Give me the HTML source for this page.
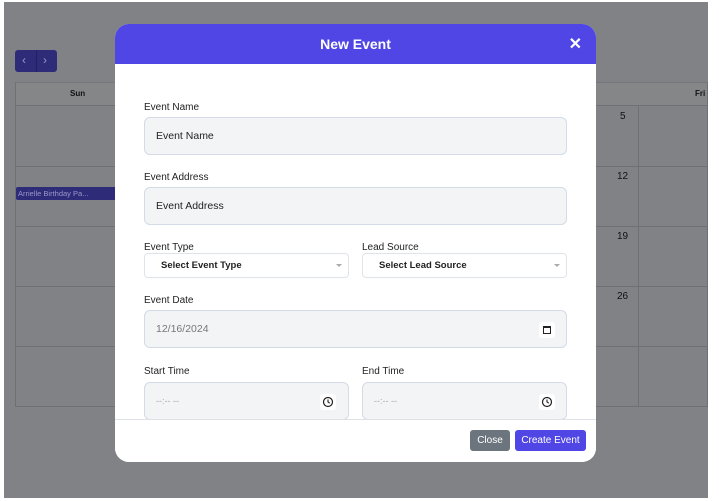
<!DOCTYPE html>
<html><head><style>
*{box-sizing:border-box;margin:0;padding:0}
body{width:719px;height:501px;background:#fff;font-family:"Liberation Sans",sans-serif;position:relative;overflow:hidden}
.ov{position:absolute;left:4px;top:2px;width:704px;height:496px;background:#818286}
.abs{position:absolute}
.nav{left:15px;top:50px;width:42px;height:22px;background:#2e2b79;border-radius:3px}
.nav span{position:absolute;top:3px;color:#9a98c8;font-size:12px}
.hdr{left:15px;top:82px;width:693px;height:24px;background:#858688;border-top:1px solid #76777a;border-bottom:1px solid #6f7073}
.vl{width:1px;background:#6f7073}
.hl{height:1px;background:#6f7073;left:15px;width:693px}
.m{left:115px;top:24px;width:481px;height:438px;background:#fff;border-radius:14px;overflow:hidden}
.mh{height:40px;background:#4f46e5;color:#fff;font-weight:bold;font-size:14px;text-align:center;line-height:41px}
.lab{position:absolute;font-size:10px;color:#222}
.inp{position:absolute;background:#f3f4f6;border:1px solid #d3dbe6;border-radius:6px;font-size:10.5px;color:#222;padding-left:11px;display:flex;align-items:center}
.sel{position:absolute;background:#fff;border:1px solid #dfe3ea;border-radius:4px;font-size:9.5px;font-weight:bold;color:#222;padding-left:16px;display:flex;align-items:center}
.sel i{position:absolute;right:6px;top:10px;border:3px solid transparent;border-top:3px solid #aaa}
.ic{position:absolute;width:16px;height:16px;background:#fff;border-radius:3px}
.btn{position:absolute;font-size:10px;color:#fff;border-radius:3px;text-align:center;line-height:22px;height:21px}
</style></head><body>
<div class="ov"></div>
<div class="abs nav"><span style="left:7px">‹</span><span style="left:28px">›</span><div class="abs" style="left:21px;top:0;width:1px;height:22px;background:#232060"></div></div>
<div class="abs hdr"><span class="abs" style="left:55px;top:6px;font-size:8px;font-weight:bold;color:#111">Sun</span><span class="abs" style="left:680px;top:6px;font-size:8px;font-weight:bold;color:#111">Fri</span></div>
<div class="abs vl" style="left:15px;top:82px;height:324px"></div>
<div class="abs vl" style="left:638px;top:106px;height:300px"></div>
<div class="abs vl" style="left:707px;top:82px;height:324px"></div>
<div class="abs hl" style="top:166px"></div>
<div class="abs hl" style="top:226px"></div>
<div class="abs hl" style="top:286px"></div>
<div class="abs hl" style="top:346px"></div>
<div class="abs hl" style="top:406px"></div>
<div class="abs" style="left:620px;top:111px;font-size:10px;color:#111">5</div>
<div class="abs" style="left:617px;top:171px;font-size:10px;color:#111">12</div>
<div class="abs" style="left:617px;top:231px;font-size:10px;color:#111">19</div>
<div class="abs" style="left:617px;top:291px;font-size:10px;color:#111">26</div>
<div class="abs" style="left:16px;top:187px;width:110px;height:13px;background:#2e2b79;border-radius:2px;color:#9a98c8;font-size:7.5px;line-height:13px;padding-left:2px">Arrielle Birthday Pa...</div>
<div class="abs m">
<div class="mh">New Event</div>
<div class="abs" style="right:14px;top:10px;color:#fff;font-size:16px;font-weight:bold">✕</div>
<div class="lab" style="left:29px;top:78px">Event Name</div>
<div class="inp" style="left:29px;top:93px;width:423px;height:38px">Event Name</div>
<div class="lab" style="left:29px;top:148px">Event Address</div>
<div class="inp" style="left:29px;top:163px;width:423px;height:38px">Event Address</div>
<div class="lab" style="left:29px;top:218px">Event Type</div>
<div class="sel" style="left:29px;top:229px;width:205px;height:25px">Select Event Type<i></i></div>
<div class="lab" style="left:247px;top:218px">Lead Source</div>
<div class="sel" style="left:247px;top:229px;width:205px;height:25px">Select Lead Source<i></i></div>
<div class="lab" style="left:29px;top:271px">Event Date</div>
<div class="inp" style="left:29px;top:286px;width:423px;height:38px;color:#777">12/16/2024</div>
<div class="ic" style="left:424px;top:298px"><div class="abs" style="left:4px;top:4px;width:8px;height:8px;border:1px solid #222;border-top-width:2px"></div></div>
<div class="lab" style="left:29px;top:342px">Start Time</div>
<div class="inp" style="left:29px;top:358px;width:205px;height:38px;color:#aaa;font-size:9px">--:-- --</div>
<div class="ic" style="left:205px;top:370px"><svg width="16" height="16" viewBox="0 0 16 16"><circle cx="8" cy="8" r="4.5" fill="none" stroke="#222" stroke-width="1.2"/><path d="M8 5.5V8l1.8 1.2" fill="none" stroke="#222" stroke-width="1.1"/></svg></div>
<div class="lab" style="left:247px;top:342px">End Time</div>
<div class="inp" style="left:247px;top:358px;width:205px;height:38px;color:#aaa;font-size:9px">--:-- --</div>
<div class="ic" style="left:424px;top:370px"><svg width="16" height="16" viewBox="0 0 16 16"><circle cx="8" cy="8" r="4.5" fill="none" stroke="#222" stroke-width="1.2"/><path d="M8 5.5V8l1.8 1.2" fill="none" stroke="#222" stroke-width="1.1"/></svg></div>
<div class="abs" style="left:0;top:395px;width:481px;height:43px;background:#fff;border-top:1px solid #dee2e6"></div>
<div class="btn" style="left:355px;top:406px;width:40px;background:#6c757d">Close</div>
<div class="btn" style="left:400px;top:406px;width:71px;background:#4f46e5">Create Event</div>
</div>
</body></html>
